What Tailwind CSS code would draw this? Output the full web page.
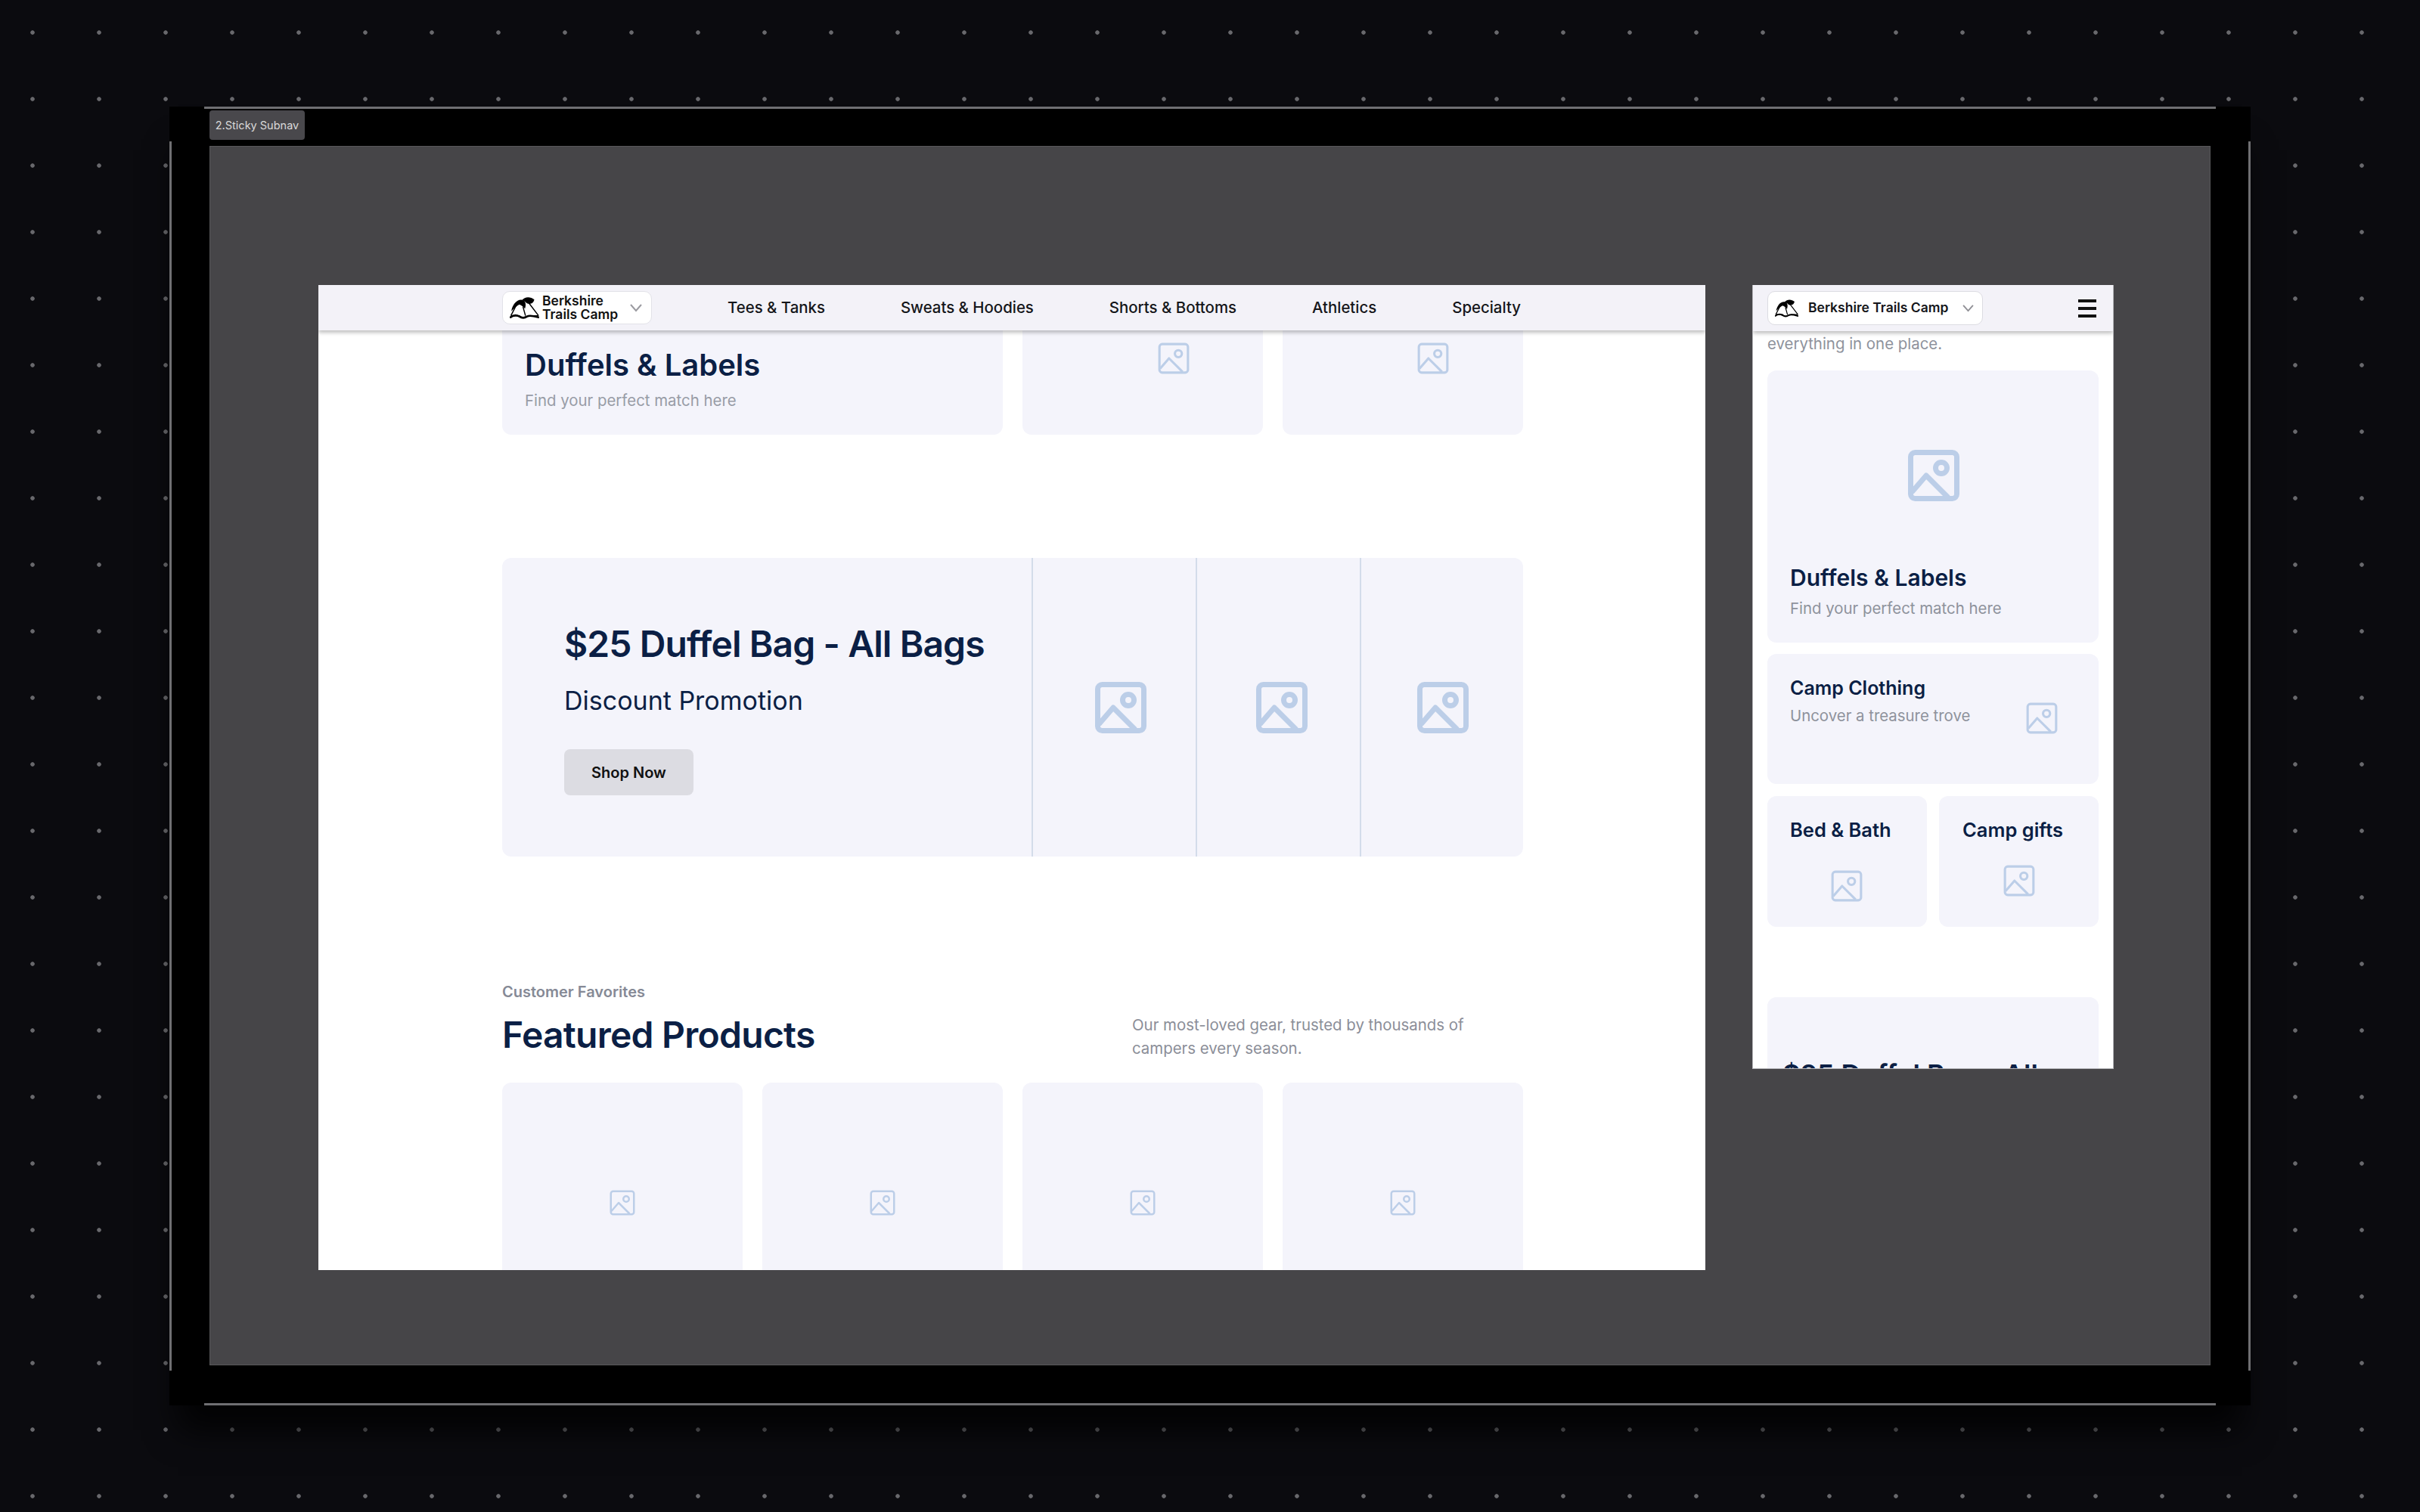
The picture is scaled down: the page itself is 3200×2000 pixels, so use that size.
<!DOCTYPE html>
<html lang="en">
<head>
    <meta charset="UTF-8">
    <title>Sticky Subnav</title>
    <script src="https://cdn.jsdelivr.net/npm/@tailwindcss/browser@4"></script>
</head>
<body class="w-[3200px] h-[2000px] overflow-hidden bg-[#0b0b0f] bg-[radial-gradient(circle_at_center,#68686c_2.4px,transparent_3.1px)] bg-[length:88px_88px] bg-[position:-1px_-1px] [font-family:Inter,sans-serif] pt-[141px] pl-[224px]">
    <!-- shared icon -->
    <svg class="hidden">
        <symbol id="img" viewBox="0 0 68 68" fill="none">
            <rect x="3.5" y="3.5" width="61" height="61" rx="6" stroke="currentColor"/>
            <circle cx="44" cy="24" r="7.5" stroke="currentColor"/>
            <path d="M5 56 L24 34 L53 63" stroke="currentColor" stroke-linejoin="round"/>
        </symbol>
        <symbol id="logo" viewBox="0 0 116 87">
            <path d="M6 56 C10 30 28 8 48 11 C62 13 66 28 60 46 C54 38 46 32 38 29 C28 34 16 44 6 56Z" fill="#000"/>
            <path d="M48 12 C60 -3 82 -3 97 10 C94 26 80 30 68 25 C62 19 56 15 48 12Z" fill="#000"/>
            <path d="M30 24 L4 74 M52 38 L62 74 M76 24 L114 74 M6 74 H40 M78 74 H112" stroke="#000" stroke-width="4.5" fill="none"/>
            <path d="M0 82 C14 70 26 70 38 77 C48 84 58 84 68 77 C80 70 98 76 116 81" stroke="#000" stroke-width="8" fill="none"/>
        </symbol>
    </svg>

    <!-- Figma frame -->
    <div class="relative w-[2752px] h-[1718px] bg-black px-[53px] pt-[5px] shadow-[0_45px_40px_-12px_rgba(0,0,0,0.8)]">
        <div class="absolute top-0 left-[46px] right-[46px] h-[3px] bg-[#6f6f72]"></div>
        <div class="absolute bottom-0 left-[46px] right-[46px] h-[3px] bg-[#6f6f72]"></div>
        <div class="absolute left-0 top-[46px] bottom-[46px] w-[3px] bg-[#6f6f72]"></div>
        <div class="absolute right-0 top-[46px] bottom-[46px] w-[3px] bg-[#6f6f72]"></div>

        <div class="w-[126px] h-[39px] flex items-center justify-center rounded-[4px] bg-[#49484c] text-[14.5px] text-[#d9d9d9] whitespace-nowrap">2.Sticky Subnav</div>

        <div class="mt-[8px] h-[1613px] flex items-start gap-[62px] pl-[143px] pt-[183px] bg-[#464548] border border-[#58585a]">

            <!-- Desktop preview -->
            <div class="relative w-[1834px] h-[1303px] shrink-0 overflow-hidden bg-white">
                <nav class="absolute top-0 inset-x-0 z-10 h-[60px] pl-[243px] flex items-center bg-[#f3f2f8] shadow-[0_3px_5px_rgba(0,0,0,0.25)]">
                    <div class="w-[198px] h-[44px] flex items-center pl-[9px] bg-white rounded-[10px] border border-[#e2e2e8]">
                        <svg class="w-[39px] h-[29px] shrink-0"><use href="#logo"/></svg>
                        <div class="ml-[4px] text-[17.5px] leading-[18px] font-semibold text-[#111]">Berkshire<br>Trails Camp</div>
                        <svg class="ml-[15px] w-[18px] h-[12px] shrink-0" viewBox="0 0 18 12" fill="none"><path d="M2 2 L9 10 L16 2" stroke="#9a9aa0" stroke-width="2"/></svg>
                    </div>
                    <div class="ml-[100px] flex gap-[100px] text-[20.4px] font-medium text-[#15161a] whitespace-nowrap">
                        <span>Tees &amp; Tanks</span>
                        <span>Sweats &amp; Hoodies</span>
                        <span>Shorts &amp; Bottoms</span>
                        <span>Athletics</span>
                        <span>Specialty</span>
                    </div>
                </nav>

                <div class="ml-[243px] w-[1350px]">
                    <!-- Category row, scrolled under the nav -->
                    <div class="grid grid-cols-[662px_318px_318px] gap-[26px] h-[198px]">
                        <div class="flex flex-col justify-end pl-[30px] pb-[31px] rounded-b-[12px] bg-[#f4f4fb]">
                            <h3 class="text-[40px] leading-[48px] font-semibold text-[#0b1f45] whitespace-nowrap">Duffels &amp; Labels</h3>
                            <p class="mt-[9px] text-[20.4px] leading-[28px] text-[#989ca6]">Find your perfect match here</p>
                        </div>
                        <div class="pl-[179px] pt-[76px] rounded-b-[12px] bg-[#f4f4fb]">
                            <svg class="w-[42px] h-[42px] text-[#bccee8] stroke-[5]"><use href="#img"/></svg>
                        </div>
                        <div class="pl-[178px] pt-[76px] rounded-b-[12px] bg-[#f4f4fb]">
                            <svg class="w-[42px] h-[42px] text-[#bccee8] stroke-[5]"><use href="#img"/></svg>
                        </div>
                    </div>

                    <!-- Promo -->
                    <div class="mt-[163px] h-[395px] flex rounded-[12px] bg-[#f4f4fb] overflow-hidden">
                        <div class="w-[700px] shrink-0 pl-[82px] pt-[86px]">
                            <h2 class="text-[48px] leading-[56px] font-semibold tracking-[-0.9px] text-[#0b1f45] whitespace-nowrap">$25 Duffel Bag - All Bags</h2>
                            <p class="mt-[25px] text-[34px] leading-[44px] text-[#0b1f45] whitespace-nowrap">Discount Promotion</p>
                            <button class="mt-[42px] w-[171px] h-[61px] rounded-[8px] bg-[#dcdce2] text-[20px] font-semibold text-[#111]">Shop Now</button>
                        </div>
                        <div class="w-[217px] shrink-0 flex items-center border-l-2 border-[#d3dcea] pl-[82px]">
                            <svg class="w-[68px] h-[68px] text-[#bccee8] stroke-[7]"><use href="#img"/></svg>
                        </div>
                        <div class="w-[217px] shrink-0 flex items-center border-l-2 border-[#d3dcea] pl-[78px]">
                            <svg class="w-[68px] h-[68px] text-[#bccee8] stroke-[7]"><use href="#img"/></svg>
                        </div>
                        <div class="flex-1 flex items-center border-l-2 border-[#d3dcea] pl-[74px]">
                            <svg class="w-[68px] h-[68px] text-[#bccee8] stroke-[7]"><use href="#img"/></svg>
                        </div>
                    </div>

                    <!-- Featured -->
                    <div class="mt-[165px] h-[134px] flex justify-between items-start">
                        <div>
                            <p class="text-[20px] leading-[28px] font-semibold text-[#868a96]">Customer Favorites</p>
                            <h2 class="mt-[15px] text-[48px] leading-[56px] font-semibold tracking-[-0.75px] text-[#0b1f45]">Featured Products</h2>
                        </div>
                        <p class="mt-[42px] w-[517px] text-[20.4px] leading-[31px] text-[#8b8e98]">Our most-loved gear, trusted by thousands of campers every season.</p>
                    </div>
                    <div class="grid grid-cols-4 gap-[26px]">
                        <div class="h-[318px] flex items-center justify-center rounded-[12px] bg-[#f4f4fb]"><svg class="w-[34px] h-[34px] text-[#bccee8] stroke-[5]"><use href="#img"/></svg></div>
                        <div class="h-[318px] flex items-center justify-center rounded-[12px] bg-[#f4f4fb]"><svg class="w-[34px] h-[34px] text-[#bccee8] stroke-[5]"><use href="#img"/></svg></div>
                        <div class="h-[318px] flex items-center justify-center rounded-[12px] bg-[#f4f4fb]"><svg class="w-[34px] h-[34px] text-[#bccee8] stroke-[5]"><use href="#img"/></svg></div>
                        <div class="h-[318px] flex items-center justify-center rounded-[12px] bg-[#f4f4fb]"><svg class="w-[34px] h-[34px] text-[#bccee8] stroke-[5]"><use href="#img"/></svg></div>
                    </div>
                </div>
            </div>

            <!-- Mobile preview -->
            <div class="relative w-[478px] h-[1037px] shrink-0 overflow-hidden bg-white px-[19px] pt-[64px] border-x border-b border-[#b4b4b8]">
                <nav class="absolute top-0 inset-x-0 z-10 h-[61px] flex items-center justify-between pl-[19px] pr-[22px] bg-[#f3f2f8] shadow-[0_3px_5px_rgba(0,0,0,0.25)]">
                    <div class="w-[285px] h-[45px] flex items-center pl-[9px] bg-white rounded-[10px] border border-[#dcdce2]">
                        <svg class="w-[31px] h-[24px] shrink-0"><use href="#logo"/></svg>
                        <span class="ml-[13px] text-[17.5px] font-semibold text-[#15161a] whitespace-nowrap">Berkshire Trails Camp</span>
                        <svg class="ml-[17px] w-[17px] h-[11px] shrink-0" viewBox="0 0 18 12" fill="none"><path d="M2 2 L9 10 L16 2" stroke="#8f8f95" stroke-width="2"/></svg>
                    </div>
                    <div class="w-[24px] flex flex-col gap-[6px]">
                        <span class="h-[4px] bg-[#111]"></span>
                        <span class="h-[4px] bg-[#111]"></span>
                        <span class="h-[4px] bg-[#111]"></span>
                    </div>
                </nav>

                <p class="text-[20.4px] leading-[28px] text-[#8e929c]">everything in one place.</p>

                <div class="mt-[21px] h-[360px] pt-[105px] pl-[30px] rounded-[12px] bg-[#f4f4fb]">
                    <svg class="ml-[156px] w-[68px] h-[68px] text-[#bccee8] stroke-[7]"><use href="#img"/></svg>
                    <h3 class="mt-[83px] text-[30px] leading-[36px] font-semibold text-[#0b1f45]">Duffels &amp; Labels</h3>
                    <p class="mt-[9px] text-[20.4px] leading-[28px] text-[#8e929c]">Find your perfect match here</p>
                </div>

                <div class="mt-[15px] h-[172px] flex justify-between pt-[29px] pl-[30px] pr-[54px] rounded-[12px] bg-[#f4f4fb]">
                    <div>
                        <h3 class="text-[25px] leading-[32px] font-semibold text-[#0b1f45]">Camp Clothing</h3>
                        <p class="mt-[7px] text-[20.4px] leading-[28px] text-[#8e929c]">Uncover a treasure trove</p>
                    </div>
                    <svg class="mt-[35px] w-[42px] h-[42px] text-[#bccee8] stroke-[5]"><use href="#img"/></svg>
                </div>

                <div class="mt-[16px] grid grid-cols-2 gap-[16px]">
                    <div class="h-[173px] pt-[29px] pl-[30px] rounded-[12px] bg-[#f4f4fb]">
                        <h3 class="text-[25.5px] leading-[32px] font-semibold text-[#0b1f45]">Bed &amp; Bath</h3>
                        <svg class="mt-[37px] ml-[54px] w-[42px] h-[42px] text-[#bccee8] stroke-[5]"><use href="#img"/></svg>
                    </div>
                    <div class="h-[173px] pt-[29px] pl-[31px] rounded-[12px] bg-[#f4f4fb]">
                        <h3 class="text-[25.5px] leading-[32px] font-semibold text-[#0b1f45]">Camp gifts</h3>
                        <svg class="mt-[30px] ml-[54px] w-[42px] h-[42px] text-[#bccee8] stroke-[5]"><use href="#img"/></svg>
                    </div>
                </div>

                <div class="mt-[93px] h-[300px] pl-[20px] pt-[80px] rounded-[12px] bg-[#f4f4fb]">
                    <h2 class="text-[36px] leading-[44px] font-semibold text-[#0b1f45] whitespace-nowrap">$25 Duffel Bag - All</h2>
                </div>
            </div>
        </div>
    </div>
</body>
</html>
